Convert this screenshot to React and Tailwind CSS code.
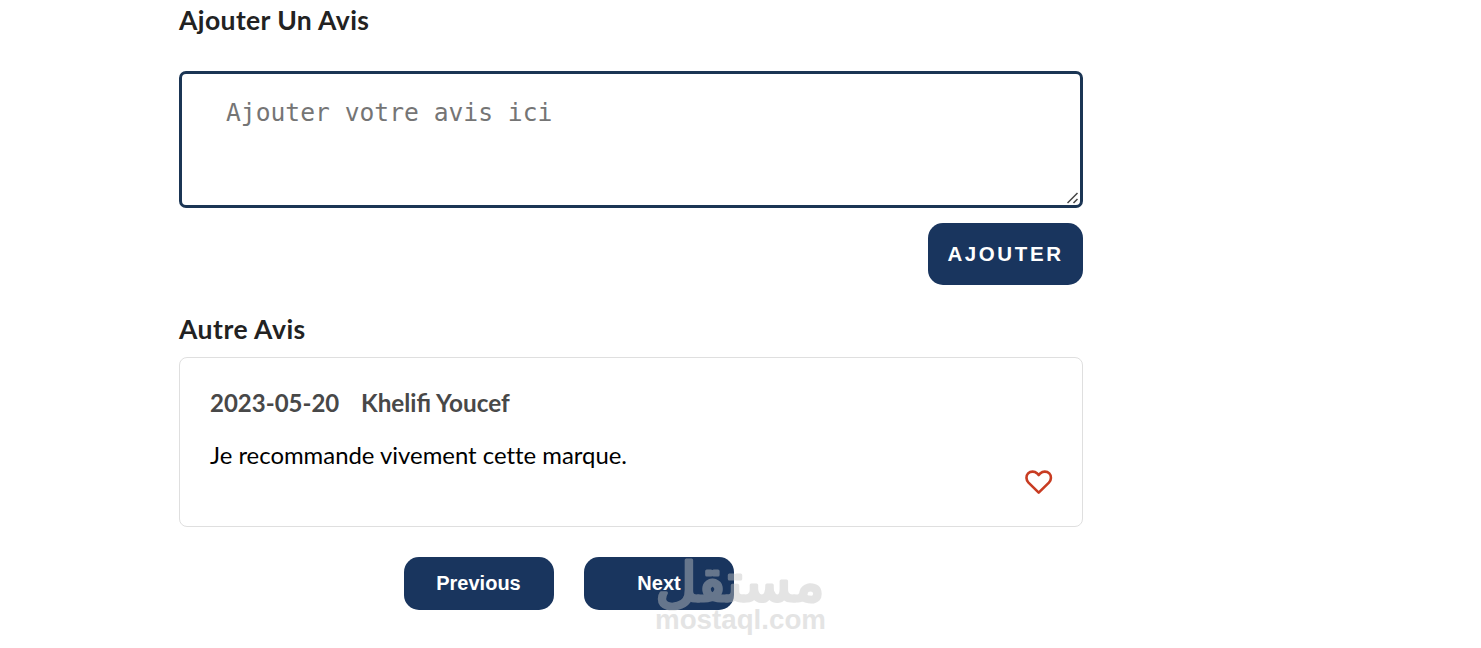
import React, { useState } from "react";

const reviews = [
  {
    id: 1,
    date: "2023-05-20",
    author: "Khelifi Youcef",
    text: "Je recommande vivement cette marque.",
  },
];

const HeartIcon = ({ filled }) => (
  <svg
    viewBox="0 0 28 26"
    className="h-[26px] w-7"
    fill={filled ? "#c83c22" : "none"}
    stroke="#c83c22"
    strokeWidth="2.6"
    strokeLinejoin="round"
  >
    <path d="M13.7 23.6 L3.5 13.6 C0.9 10.8 0.8 6.8 3.1 4.4 C5.6 1.9 9.7 2.1 11.9 4.2 L13.7 6 L15.5 4.2 C17.7 2.1 21.8 1.9 24.3 4.4 C26.6 6.8 26.5 10.8 23.9 13.6 Z" />
  </svg>
);

const Watermark = () => (
  <svg
    viewBox="0 0 180 90"
    className="pointer-events-none absolute left-[650px] top-[550px] h-[90px] w-[180px] overflow-visible opacity-45"
    fill="#c5c5c5"
    stroke="#c5c5c5"
    strokeLinejoin="round"
  >
    <text
      x="90"
      y="51"
      textAnchor="middle"
      textLength="169"
      lengthAdjust="spacingAndGlyphs"
      className="font-['DejaVu_Sans',sans-serif] text-[54px]"
      strokeWidth="3.2"
    >
      مستقل
    </text>
    <text
      x="5"
      y="79"
      textLength="171"
      lengthAdjust="spacingAndGlyphs"
      className="font-['Liberation_Sans',sans-serif] text-[28px] font-bold"
      stroke="none"
    >
      mostaql.com
    </text>
  </svg>
);

const App = () => {
  const [comment, setComment] = useState("");
  const [liked, setLiked] = useState(false);

  return (
    <div className="relative h-[648px] overflow-hidden bg-white font-['Lato',sans-serif]">
      <div className="ml-[179px] w-[904px]">
        <h2 className="text-[26.5px] leading-10 font-bold tracking-[0.4px] text-[#222]">
          Ajouter Un Avis
        </h2>
        <form
          onSubmit={(e) => e.preventDefault()}
          className="mt-[31px] flex flex-col items-end"
        >
          <div className="relative w-full">
            <textarea
              value={comment}
              onChange={(e) => setComment(e.target.value)}
              placeholder="Ajouter votre avis ici"
              className="block h-[137px] w-full resize-none rounded-[7px] border-3 border-[#1b3554] px-[44px] py-[23px] font-['DejaVu_Sans_Mono',monospace] text-[24.65px] leading-8 outline-none placeholder:text-[#757575]"
            />
            <svg
              viewBox="0 0 12 12"
              className="pointer-events-none absolute right-[4px] bottom-[4px] size-3"
              stroke="#444"
              strokeWidth="1.5"
            >
              <path d="M0.5 11 L10.5 1 M6.5 11 L10.5 7" />
            </svg>
          </div>
          <button
            type="submit"
            className="mt-[15px] h-[62px] w-[155px] rounded-[15px] bg-[#19355e] font-['Liberation_Sans',sans-serif] text-[20.5px] font-bold tracking-[2.6px] text-white"
          >
            AJOUTER
          </button>
        </form>
        <h2 className="mt-[24px] text-[26.5px] leading-10 font-bold tracking-[0.5px] text-[#222]">
          Autre Avis
        </h2>
        {reviews.map((res) => (
          <div
            key={res.id}
            className="mt-[8px] flex h-[170px] flex-col rounded-lg border border-[#dfdfdf] px-[30px] pt-[25px]"
          >
            <div className="flex gap-[22px] text-[24px] leading-10 font-bold text-[#484848]">
              <span className="w-[129px] whitespace-nowrap">{res.date}</span>
              <span className="text-[24.3px]">{res.author}</span>
            </div>
            <p className="mt-[12px] text-[23.9px] leading-10 text-black [font-variant-ligatures:none]">
              {res.text}
            </p>
            <button
              type="button"
              className="-mt-[6px] -mr-px self-end"
              onClick={() => setLiked(!liked)}
            >
              <HeartIcon filled={liked} />
            </button>
          </div>
        ))}
        <div className="mt-[30px] ml-[225px] flex gap-[30px] font-['Liberation_Sans',sans-serif] text-[20px] font-bold text-white">
          <button className="h-[53px] w-[150px] rounded-[15px] bg-[#19355e] pr-[1px] pb-[2px]">
            Previous
          </button>
          <button className="h-[53px] w-[150px] rounded-[15px] bg-[#19355e] pb-[2px]">
            Next
          </button>
        </div>
      </div>
      <Watermark />
    </div>
  );
};

export default App;
